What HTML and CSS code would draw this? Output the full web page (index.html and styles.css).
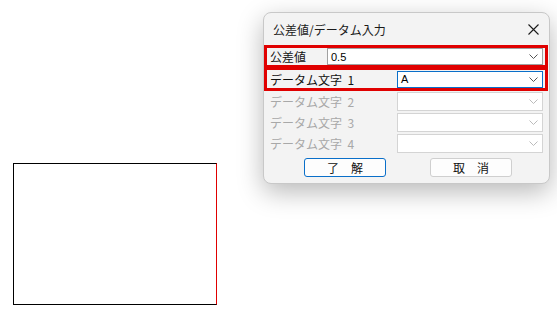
FILE: index.html
```html
<!DOCTYPE html>
<html lang="ja">
<head>
<meta charset="UTF-8" />
<title>公差値/データム入力</title>
<link rel="stylesheet" href="styles.css">
</head>
<body>

<div class="frame"></div>

<div class="dialog">
  <div class="titlebar">
    <span class="title">公差値/データム入力</span>
    <svg class="close" width="11" height="11" viewBox="0 0 11 11">
      <path d="M0.5 0.5 L10.5 10.5 M10.5 0.5 L0.5 10.5" stroke="#1a1a1a" stroke-width="1.1" fill="none"/>
    </svg>
  </div>

  <div class="content">
    <div class="row hl">
      <span class="label short">公差値</span>
      <div class="combo"><span class="value">0.5</span><svg class="chev" width="9" height="5" viewBox="0 0 9 5"><polyline points="0.5,0.5 4.5,4.5 8.5,0.5" fill="none" stroke="#555" stroke-width="1"/></svg></div>
    </div>
    <div class="row hl">
      <span class="label">データム文字&nbsp;&nbsp;1</span>
      <div class="combo focus"><span class="value">A</span><svg class="chev" width="9" height="5" viewBox="0 0 9 5"><polyline points="0.5,0.5 4.5,4.5 8.5,0.5" fill="none" stroke="#555" stroke-width="1"/></svg></div>
    </div>
    <div class="row off">
      <span class="label">データム文字&nbsp;&nbsp;2</span>
      <div class="combo"><span class="value"></span><svg class="chev" width="9" height="5" viewBox="0 0 9 5"><polyline points="0.5,0.5 4.5,4.5 8.5,0.5" fill="none" stroke="#bbb" stroke-width="1"/></svg></div>
    </div>
    <div class="row off">
      <span class="label">データム文字&nbsp;&nbsp;3</span>
      <div class="combo"><span class="value"></span><svg class="chev" width="9" height="5" viewBox="0 0 9 5"><polyline points="0.5,0.5 4.5,4.5 8.5,0.5" fill="none" stroke="#bbb" stroke-width="1"/></svg></div>
    </div>
    <div class="row off">
      <span class="label">データム文字&nbsp;&nbsp;4</span>
      <div class="combo"><span class="value"></span><svg class="chev" width="9" height="5" viewBox="0 0 9 5"><polyline points="0.5,0.5 4.5,4.5 8.5,0.5" fill="none" stroke="#bbb" stroke-width="1"/></svg></div>
    </div>

    <div class="buttons">
      <button class="btn default">了　解</button>
      <button class="btn">取　消</button>
    </div>
  </div>
</div>

</body>
</html>
```

FILE: styles.css
```css
body {
  margin: 0;
  width: 557px;
  height: 318px;
  background: #ffffff;
  position: relative;
  overflow: hidden;
  font-family: "Noto Sans CJK JP", "Liberation Sans", sans-serif;
}

.frame {
  position: absolute;
  left: 13px;
  top: 163px;
  width: 202px;
  height: 140px;
  border: 1px solid #000;
  border-right-color: #e00000;
}

.dialog {
  position: absolute;
  left: 263px;
  top: 12px;
  width: 285px;
  height: 170px;
  background: #f3f3f3;
  border: 1px solid #c8c8c8;
  border-radius: 8px;
  box-shadow: 0 8px 26px rgba(0,0,0,0.28);
}

.titlebar {
  height: 32px;
  display: flex;
  align-items: center;
  justify-content: space-between;
  padding: 0 10px 0 9px;
}

.title {
  font-size: 12px;
  color: #1a1a1a;
}

.content {
  padding: 0 1px 0 0;
}

.row {
  display: flex;
  align-items: center;
  height: 21px;
  border-left: 3px solid transparent;
  border-right: 3px solid transparent;
  padding: 0 2px 0 3px;
}

.row.hl {
  height: 17px;
  border: 3px solid #e00000;
}

.row.hl + .row.hl {
  border-top-width: 2px;
  height: 18px;
}

.label {
  width: 127px;
  flex-shrink: 0;
  font-size: 12px;
  color: #111;
  white-space: nowrap;
}

.label.short {
  width: 57px;
}

.off .label {
  color: #a8a8a8;
}

.combo {
  flex: 1;
  height: 17px;
  box-sizing: border-box;
  background: #fff;
  border: 1px solid #a0a0a0;
  display: flex;
  align-items: center;
  justify-content: space-between;
  padding: 0 4px 0 3px;
}

.off .combo {
  height: 19px;
  border-color: #d4d4d4;
}

.combo.focus {
  border-color: #0a6fc9;
}

.value {
  font-family: "Liberation Sans", sans-serif;
  font-size: 11px;
  color: #000;
}

.buttons {
  display: flex;
  gap: 44px;
  padding: 4px 0 0 40px;
}

.btn {
  width: 82px;
  height: 19px;
  padding: 0;
  font-family: "Noto Sans CJK JP", sans-serif;
  font-size: 12px;
  line-height: 1;
  color: #111;
  background: #fdfdfd;
  border: 1px solid #cfcfcf;
  border-radius: 3px;
}

.btn.default {
  border: 1.5px solid #0a6fc9;
}
```
